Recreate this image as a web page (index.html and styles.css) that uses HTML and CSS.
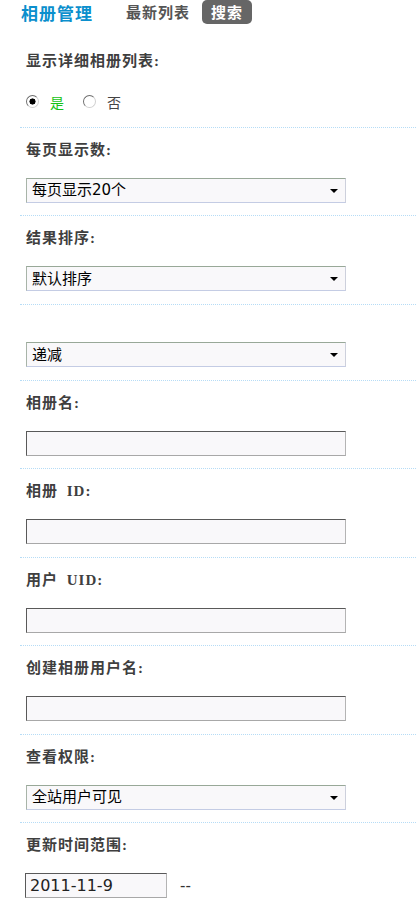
FILE: index.html
```html
<!DOCTYPE html>
<html lang="zh-CN">
<head>
    <meta charset="UTF-8">
    <meta name="viewport" content="width=device-width, initial-scale=1.0">
    <title>相册管理 - 搜索</title>
    <link rel="stylesheet" href="styles.css">
</head>
<body>
    <!-- Tabs -->
    <div class="tabs">
        <span class="tab-title">相册管理</span>
        <a class="tab" href="#">最新列表</a>
        <a class="tab current" href="#">搜索</a>
    </div>

    <!-- Search Form -->
    <form class="search-list">
        <div class="item">
            <div class="item-title">显示详细相册列表:</div>
            <div class="item-field">
                <label class="radio-label"><input type="radio" name="detail" value="1" checked><span class="on">是</span></label>
                <label class="radio-label"><input type="radio" name="detail" value="0"><span>否</span></label>
            </div>
        </div>

        <div class="item">
            <div class="item-title">每页显示数:</div>
            <div class="item-field">
                <div class="select-wrap">
                    <select class="select" name="perpage">
                        <option>每页显示20个</option>
                        <option>每页显示50个</option>
                        <option>每页显示100个</option>
                    </select>
                </div>
            </div>
        </div>

        <div class="item">
            <div class="item-title">结果排序:</div>
            <div class="item-field">
                <div class="select-wrap">
                    <select class="select" name="orderby">
                        <option>默认排序</option>
                        <option>更新时间</option>
                        <option>图片数</option>
                    </select>
                </div>
            </div>
        </div>

        <div class="item no-title">
            <div class="item-field">
                <div class="select-wrap">
                    <select class="select" name="ordersc">
                        <option>递减</option>
                        <option>递增</option>
                    </select>
                </div>
            </div>
        </div>

        <div class="item">
            <div class="item-title">相册名:</div>
            <div class="item-field">
                <input class="text" type="text" name="albumname">
            </div>
        </div>

        <div class="item">
            <div class="item-title">相册 ID:</div>
            <div class="item-field">
                <input class="text" type="text" name="albumid">
            </div>
        </div>

        <div class="item">
            <div class="item-title">用户 UID:</div>
            <div class="item-field">
                <input class="text" type="text" name="uid">
            </div>
        </div>

        <div class="item">
            <div class="item-title">创建相册用户名:</div>
            <div class="item-field">
                <input class="text" type="text" name="username">
            </div>
        </div>

        <div class="item">
            <div class="item-title">查看权限:</div>
            <div class="item-field">
                <div class="select-wrap">
                    <select class="select" name="friend">
                        <option>全站用户可见</option>
                        <option>仅好友可见</option>
                        <option>仅自己可见</option>
                    </select>
                </div>
            </div>
        </div>

        <div class="item short">
            <div class="item-title">更新时间范围:</div>
            <div class="item-field">
                <input class="text date" type="text" name="starttime" value="2011-11-9">
                <span class="range-sep">--</span>
            </div>
        </div>
    </form>
</body>
</html>
```

FILE: styles.css
```css
/* General Reset */
* {
    box-sizing: border-box;
    margin: 0;
    padding: 0;
}

body {
    font-family: "Noto Sans CJK SC", sans-serif;
    background-color: #fff;
    color: #444;
}

/* Tabs */
.tabs {
    display: flex;
    align-items: center;
    height: 24px;
    padding-left: 21px;
    margin-bottom: 15px;
}

.tab-title {
    margin-right: 33px;
    color: #0b8fcd;
    font-size: 17px;
    font-weight: bold;
    letter-spacing: 1px;
}

.tab {
    margin-right: 12px;
    color: #555;
    font-size: 15px;
    font-weight: bold;
    letter-spacing: 1px;
    text-decoration: none;
    line-height: 24px;
}

.tab.current {
    height: 24px;
    padding: 0 9px;
    background-color: #666;
    color: #fff;
    border-radius: 5px;
}

/* Form rows */
.search-list {
    margin-left: 20px;
}

.item {
    padding: 13px 0 12.5px;
    border-bottom: 1px dotted #b6dcf6;
}

.item.no-title {
    padding-top: 37.5px;
}

.item.short {
    width: 175px;
}

.item-title {
    height: 18px;
    line-height: 18px;
    margin-bottom: 19px;
    padding-left: 6px;
    font-family: "Liberation Serif", "Noto Sans CJK SC", serif;
    font-size: 15px;
    font-weight: bold;
    letter-spacing: 1px;
    word-spacing: 4px;
    color: #3f3f3f;
}

.item-field {
    display: flex;
    align-items: center;
    height: 25px;
    padding-left: 6px;
}

/* Radios */
.radio-label {
    display: flex;
    align-items: center;
    font-size: 14px;
    color: #444;
    margin-right: 19px;
}

.radio-label input {
    appearance: none;
    width: 13px;
    height: 13px;
    margin-right: 11px;
    border: 1px solid;
    border-color: #6e6e6e #d0d0d0 #d0d0d0 #6e6e6e;
    border-radius: 50%;
    background: #fff;
}

.radio-label input:checked {
    background: radial-gradient(circle, #000 0 2.8px, #fff 3.3px);
}

.radio-label .on {
    color: #14c314;
}

/* Selects */
.select-wrap {
    position: relative;
    width: 320px;
}

.select-wrap::after {
    content: "";
    position: absolute;
    right: 8px;
    top: 11px;
    border-left: 4px solid transparent;
    border-right: 4px solid transparent;
    border-top: 4px solid #000;
    pointer-events: none;
}

.select {
    appearance: none;
    display: block;
    width: 320px;
    height: 25px;
    padding: 0 0 0 5px;
    border: 1px solid;
    border-color: #98a898 #cdd0dc #c4cce4 #a8b4a8;
    border-radius: 0;
    background-color: #f9f8fa;
    font-family: "DejaVu Sans", "Noto Sans CJK SC", sans-serif;
    font-size: 15px;
    color: #000;
    outline: none;
}

/* Text inputs */
.text {
    width: 320px;
    height: 25px;
    padding: 0 4px;
    border: 1px solid;
    border-color: #595959 #b4b4b4 #a8a8a8 #595959;
    background-color: #f9f8fa;
    font-family: "DejaVu Sans", "Noto Sans CJK SC", sans-serif;
    font-size: 16px;
    color: #222;
    outline: none;
}

.text.date {
    width: 142px;
    margin-left: -1px;
}

.range-sep {
    margin-left: 13px;
    font-family: "DejaVu Sans", sans-serif;
    font-size: 15px;
    color: #333;
}
```
